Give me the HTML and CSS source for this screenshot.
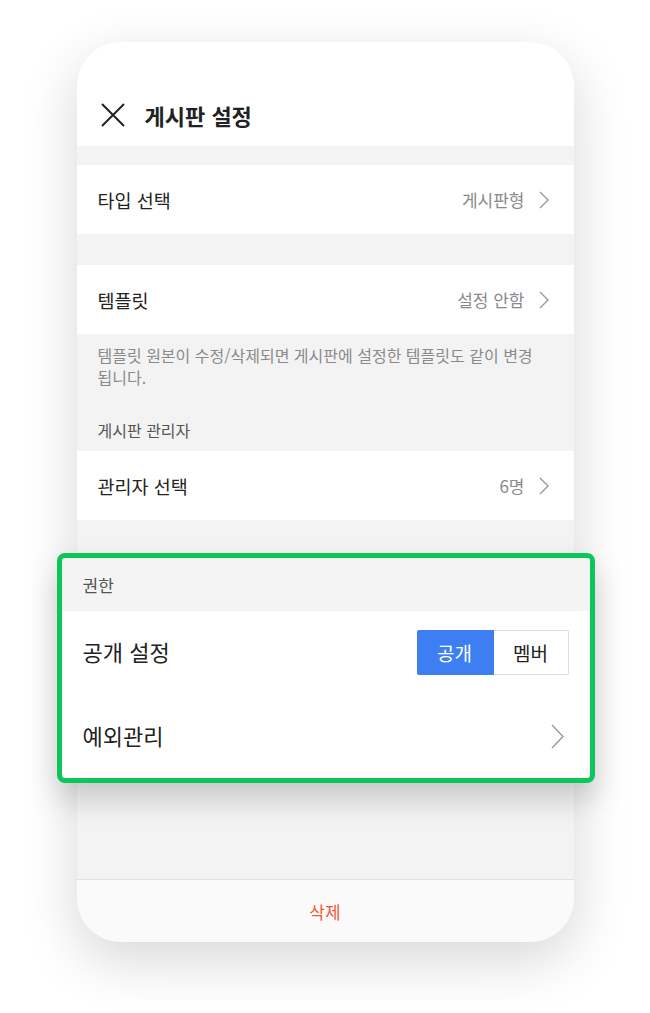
FILE: index.html
```html
<!DOCTYPE html>
<html lang="ko">
<head>
    <meta charset="UTF-8">
    <meta name="viewport" content="width=device-width, initial-scale=1.0">
    <title>게시판 설정</title>
    <link rel="stylesheet" href="styles.css">
</head>
<body>
    <div class="stage">
        <div class="phone">
            <!-- 상단 헤더 -->
            <div class="header">
                <svg class="close" width="24" height="24" viewBox="0 0 24 24">
                    <path d="M1 1 L23 23 M23 1 L1 23" stroke="#222" stroke-width="2" fill="none"/>
                </svg>
                <h1 class="title">게시판 설정</h1>
            </div>

            <div class="row gap-sm">
                <span class="label">타입 선택</span>
                <span class="value">게시판형</span>
                <svg class="chevron" width="10" height="18" viewBox="0 0 10 18"><polyline points="1,1 9,9 1,17" fill="none" stroke="#999" stroke-width="1.4"/></svg>
            </div>

            <div class="row gap-lg">
                <span class="label">템플릿</span>
                <span class="value">설정 안함</span>
                <svg class="chevron" width="10" height="18" viewBox="0 0 10 18"><polyline points="1,1 9,9 1,17" fill="none" stroke="#999" stroke-width="1.4"/></svg>
            </div>
            <p class="desc">템플릿 원본이 수정/삭제되면 게시판에 설정한 템플릿도 같이 변경됩니다.</p>
            <p class="caption">게시판 관리자</p>

            <div class="row">
                <span class="label">관리자 선택</span>
                <span class="value">6명</span>
                <svg class="chevron" width="10" height="18" viewBox="0 0 10 18"><polyline points="1,1 9,9 1,17" fill="none" stroke="#999" stroke-width="1.4"/></svg>
            </div>

            <!-- 확대 강조 영역 -->
            <div class="focus">
                <div class="focus-head">권한</div>
                <div class="focus-row">
                    <span class="focus-label">공개 설정</span>
                    <div class="toggle">
                        <span class="toggle-item on">공개</span>
                        <span class="toggle-item">멤버</span>
                    </div>
                </div>
                <div class="focus-row">
                    <span class="focus-label">예외관리</span>
                    <svg class="chevron-lg" width="13" height="25" viewBox="0 0 13 25"><polyline points="1,1 12,12.5 1,24" fill="none" stroke="#999" stroke-width="1.4"/></svg>
                </div>
            </div>

            <div class="spacer"></div>
            <div class="footer">삭제</div>
        </div>
    </div>
</body>
</html>
```

FILE: styles.css
```css
body {
    margin: 0;
    min-height: 1013px;
    background: #fff;
    font-family: "Noto Sans CJK KR", "Noto Sans", sans-serif;
    color: #222;
}

.stage {
    display: flex;
    justify-content: center;
    padding-top: 42px;
}

.phone {
    width: 497px;
    height: 900px;
    display: flex;
    flex-direction: column;
    background: #f3f3f3;
    border-radius: 44px;
    box-shadow: 0 18px 56px rgba(0, 0, 0, 0.16);
}

.header {
    height: 104px;
    box-sizing: border-box;
    display: flex;
    align-items: flex-end;
    gap: 20px;
    padding: 0 0 19px 24px;
    background: #fff;
    border-radius: 44px 44px 0 0;
}

.title {
    margin: 0;
    font-size: 22px;
    font-weight: 700;
    line-height: 24px;
    color: #222;
}

.row {
    height: 69px;
    display: flex;
    align-items: center;
    padding: 0 25px 0 21px;
    background: #fff;
}

.gap-sm { margin-top: 19px; }
.gap-lg { margin-top: 31px; }

.label {
    flex: 1;
    font-size: 18.5px;
}

.value {
    font-size: 17px;
    color: #8a8a8a;
    margin-right: 14px;
}

.desc {
    margin: 0;
    padding: 10px 28px 0 21px;
    font-size: 16px;
    line-height: 22px;
    color: #8a8a8a;
}

.caption {
    margin: 0;
    padding: 31px 21px 10px;
    font-size: 16px;
    line-height: 22px;
    color: #555;
}

/* 강조 박스 */
.focus {
    margin: 33px -21px 0 -20px;
    border: 5px solid #0cc55b;
    border-radius: 8px;
    background: #fff;
    box-shadow: 0 16px 30px rgba(0, 0, 0, 0.18);
}

.focus-head {
    height: 53px;
    display: flex;
    align-items: center;
    padding-left: 21px;
    background: #f4f4f4;
    font-size: 17px;
    color: #555;
    border-radius: 3px 3px 0 0;
}

.focus-row {
    height: 83px;
    display: flex;
    align-items: center;
    justify-content: space-between;
    padding: 0 21px;
}

.focus-row:last-child {
    height: 84px;
    padding-right: 26px;
}

.focus-label {
    font-size: 22px;
    margin-top: -3px;
}

.toggle {
    display: flex;
    height: 45px;
}

.toggle-item {
    width: 75px;
    display: flex;
    align-items: center;
    justify-content: center;
    font-size: 19px;
    box-sizing: border-box;
    border: 1px solid #ddd;
    border-left: none;
    border-radius: 0 2px 2px 0;
}

.toggle-item.on {
    width: 77px;
    background: #3d7ff2;
    border-color: #3d7ff2;
    color: #fff;
    border-radius: 2px 0 0 2px;
}

.spacer {
    flex: 1;
}

.footer {
    height: 62px;
    display: flex;
    align-items: center;
    justify-content: center;
    border-top: 1px solid #e2e2e2;
    background: #fafafa;
    border-radius: 0 0 44px 44px;
    font-size: 17px;
    color: #f0583c;
}
```
